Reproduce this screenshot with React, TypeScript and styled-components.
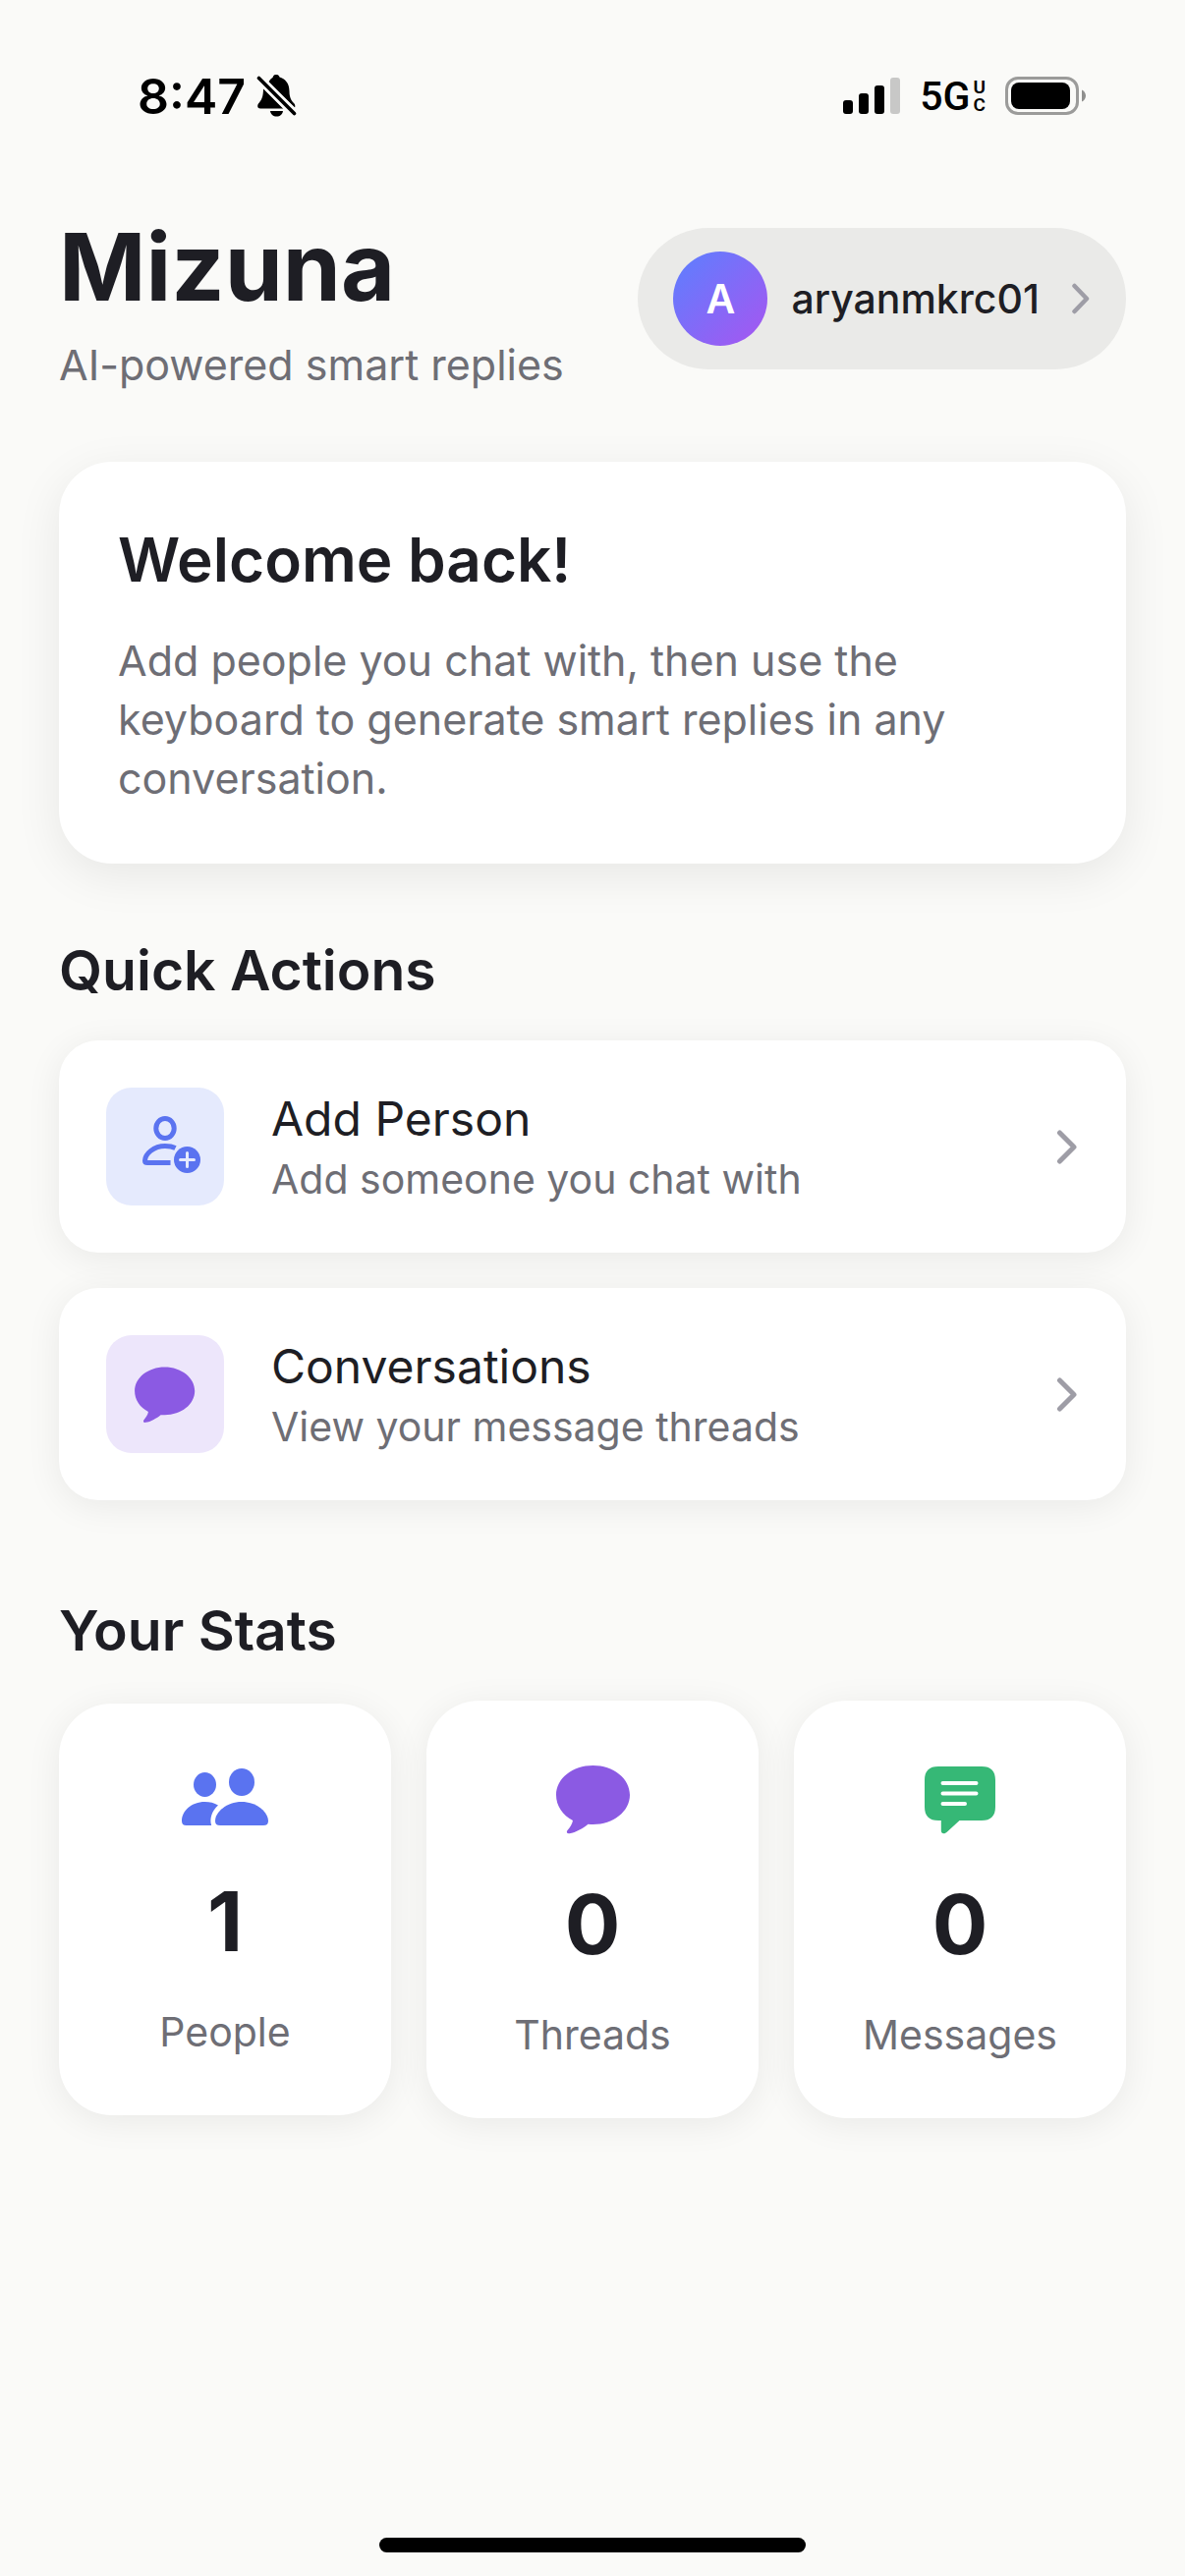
import React from "react";
import styled, { createGlobalStyle } from "styled-components";

const color = {
  page: "#fafaf8",
  card: "#ffffff",
  ink: "#1e1e24",
  muted: "#6e6e75",
  chevron: "#9e9da6",
  pill: "#eaeae8",
  blue: "#5a73f0",
  blueTint: "#e5eafd",
  purple: "#8b5ae3",
  purpleTint: "#ede6fb",
  green: "#36b876",
};

const GlobalStyle = createGlobalStyle`
  *, *::before, *::after { box-sizing: border-box; }
  body {
    margin: 0;
    background: ${color.page};
    color: ${color.ink};
    font-family: Inter, "Liberation Sans", sans-serif;
  }
  h1, h2, p, ul, dl, dd { margin: 0; padding: 0; }
  button { font: inherit; color: inherit; border: 0; cursor: pointer; text-align: left; }
  svg { display: block; flex: none; }
`;

const Screen = styled.div`
  min-height: 100vh;
  display: flex;
  flex-direction: column;
`;

const StatusBar = styled.div`
  height: 177px;
  padding: 20px 100px 0 140px;
  display: flex;
  align-items: flex-start;
  justify-content: space-between;
`;

const StatusGroup = styled.div<{ $gap: number }>`
  height: 156px;
  display: flex;
  align-items: center;
  gap: ${(p) => p.$gap}px;
`;

const Clock = styled.span`
  font-size: 50px;
  line-height: 60px;
  font-weight: 600;
  color: #000;
`;

const Network = styled.span`
  display: flex;
  align-items: center;
  gap: 3px;
  color: #000;
  font-family: Roboto, "Liberation Sans", sans-serif;
  font-size: 41px;
  line-height: 48px;
  font-weight: 500;
`;

const NetworkBadge = styled.span`
  display: flex;
  flex-direction: column;
  font-size: 19px;
  line-height: 18px;
  font-weight: 600;
`;

const Content = styled.main`
  padding: 29px 60px 0;
  display: flex;
  flex-direction: column;
`;

const Header = styled.header`
  display: flex;
  align-items: center;
  justify-content: space-between;
  margin-bottom: 69px;
`;

const Brand = styled.div`
  display: flex;
  flex-direction: column;
  gap: 3px;
`;

const Title = styled.h1`
  font-size: 95px;
  line-height: 132px;
  font-weight: 700;
`;

const BodyText = styled.p`
  font-size: 43px;
  line-height: 60px;
  color: ${color.muted};
`;

const AccountButton = styled.button`
  display: flex;
  align-items: center;
  gap: 24px;
  padding: 24px 36px;
  border-radius: 72px;
  background: ${color.pill};
  font-size: 41px;
  line-height: 54px;
  font-weight: 500;
`;

const Avatar = styled.span`
  width: 96px;
  height: 96px;
  border-radius: 50%;
  display: grid;
  place-items: center;
  color: #fff;
  font-weight: 600;
  background: linear-gradient(135deg, #5b80ff, #a855f0);
`;

const WelcomeCard = styled.section`
  display: flex;
  flex-direction: column;
  gap: 29px;
  padding: 57px 60px;
  border-radius: 54px;
  background: ${color.card};
  box-shadow: 0 12px 48px rgba(0, 0, 0, 0.08);
`;

const WelcomeTitle = styled.h2`
  font-size: 62px;
  line-height: 86px;
  font-weight: 600;
`;

const Section = styled.section<{ $top: number }>`
  margin-top: ${(p) => p.$top}px;
  display: flex;
  flex-direction: column;
  gap: 35px;
`;

const SectionTitle = styled.h2`
  font-size: 57px;
  line-height: 72px;
  font-weight: 600;
`;

const ActionList = styled.ul`
  list-style: none;
  display: flex;
  flex-direction: column;
  gap: 36px;
`;

const ActionButton = styled.button`
  width: 100%;
  display: flex;
  align-items: center;
  gap: 48px;
  padding: 48px;
  border-radius: 40px;
  background: ${color.card};
  box-shadow: 0 6px 36px rgba(0, 0, 0, 0.07);
`;

const Tile = styled.span<{ $tint: string }>`
  width: 120px;
  height: 120px;
  border-radius: 26px;
  background: ${(p) => p.$tint};
`;

const ActionText = styled.span`
  flex: 1;
  display: flex;
  flex-direction: column;
  gap: 2px;
`;

const ActionTitle = styled.span`
  font-size: 48px;
  line-height: 64px;
`;

const Caption = styled.span`
  font-size: 41px;
  line-height: 54px;
  color: ${color.muted};
`;

const StatGrid = styled.dl`
  display: grid;
  grid-template-columns: repeat(3, 1fr);
  align-items: center;
  gap: 36px;
`;

const StatCard = styled.div`
  display: flex;
  flex-direction: column;
  align-items: center;
  padding: 60px 24px 58px;
  border-radius: 54px;
  background: ${color.card};
  box-shadow: 0 6px 36px rgba(0, 0, 0, 0.07);
`;

const StatValue = styled.dd`
  order: 1;
  margin-top: 44px;
  font-size: 84px;
  line-height: 98px;
  font-weight: 700;
`;

const StatLabel = styled.dt`
  order: 2;
  margin-top: 36px;
  font-size: 41px;
  line-height: 54px;
  color: ${color.muted};
`;

const HomeIndicator = styled.div`
  width: 36%;
  height: 15px;
  margin: auto auto 24px;
  border-radius: 8px;
  background: #000;
`;

const MutedBell = () => (
  <svg width="42" height="46" viewBox="0 0 42 46" aria-label="Silent mode" role="img">
    <path
      d="M12 9C13.500 6.500 15 4.500 16.500 4C17 1.500 18.700 1 20 1C21.500 1 23 1.500 23.500 3.500C29 5 33.500 9.500 33.500 18C33.500 25 36 28 38.500 30.500C39.500 32 39.500 33.500 39 34.500Z"
      fill="#000"
    />
    <path
      d="M7 15L27.500 35.500H4C1 35.500 0.500 32.500 2 30.500C5 27 7 24 7 15Z"
      fill="#000"
    />
    <path d="M14 38H27C26.500 41.500 24 43.500 20.500 43.500C17 43.500 14.500 41.500 14 38Z" fill="#000" />
    <path d="M2.500 4.500L38.500 40.500" stroke={color.page} strokeWidth="9" />
    <path d="M2.500 4.500L38.500 40.500" stroke="#000" strokeWidth="3.600" strokeLinecap="round" />
  </svg>
);

const Signal = () => (
  <svg width="58" height="38" viewBox="0 0 58 38" aria-label="Signal strength" role="img">
    <rect x="0" y="23" width="10" height="14" rx="3" />
    <rect x="16" y="16" width="10" height="21" rx="3" />
    <rect x="32" y="8" width="10" height="29" rx="3" />
    <rect x="48" y="0" width="10" height="37" rx="3" fill="#c8c8c7" />
  </svg>
);

const Battery = () => (
  <svg width="83" height="40" viewBox="0 0 83 40" aria-label="Battery full" role="img">
    <rect x="1.500" y="1.500" width="72" height="36" rx="11.500" fill="none" stroke="#9b9b9a" strokeWidth="3" />
    <rect x="6" y="6" width="60" height="27" rx="8" />
    <path d="M78 13.500C80.500 14.500 82 17 82 19.500C82 22 80.500 24.500 78 25.500Z" fill="#8f8f8e" />
  </svg>
);

const Chevron = ({ small = false }: { small?: boolean }) =>
  small ? (
    <svg width="28" height="32" viewBox="0 0 28 32" aria-hidden="true">
      <path d="M11.500 3L24 16L11.500 29" fill="none" stroke={color.chevron} strokeWidth="4.500" strokeLinecap="round" strokeLinejoin="round" />
    </svg>
  ) : (
    <svg width="24" height="36" viewBox="0 0 24 36" aria-hidden="true">
      <path d="M4.500 4L19 18.500L4.500 33" fill="none" stroke={color.chevron} strokeWidth="5" strokeLinecap="round" strokeLinejoin="round" />
    </svg>
  );

const AddPersonIcon = () => (
  <svg width="120" height="120" viewBox="0 0 120 120" aria-hidden="true">
    <g fill="none" stroke={color.blue} strokeWidth="5">
      <ellipse cx="60" cy="41.500" rx="9.200" ry="10" />
      <path d="M70.500 61.500C67.500 60 64 59.500 60 59.500C48.500 59.500 39.500 67.500 39.500 74.500C39.500 76 40.500 76.500 42 76.500H65.500" />
    </g>
    <circle cx="82.500" cy="73.500" r="13.500" fill={color.blue} />
    <path d="M82.500 66.500V80.500M75.500 73.500H89.500" stroke={color.blueTint} strokeWidth="3" strokeLinecap="round" />
  </svg>
);

const bubblePath =
  "M42.500 6C63.200 6 80 19.200 80 36C80 52.800 63.200 66 42.500 66C41 66 39.500 66 37.500 65.800C33 69.500 25 74.500 18.500 75.300C15.800 75.600 15.200 73.500 16.500 72C19 69 21.500 65.500 22 62C11.500 56.500 5 47 5 36C5 19.200 21.800 6 42.500 6Z";

const BubbleIcon = () => (
  <svg width="84" height="75" viewBox="0 0 84 75" overflow="visible" aria-hidden="true">
    <path d={bubblePath} fill={color.purple} />
  </svg>
);

const TileBubbleIcon = () => (
  <svg width="120" height="120" viewBox="0 0 120 120" aria-hidden="true">
    <path d={bubblePath} fill={color.purple} transform="translate(25 27.500) scale(0.815)" />
  </svg>
);

const PeopleIcon = () => (
  <svg width="96" height="69" viewBox="0 0 96 69" aria-hidden="true">
    <g fill={color.blue}>
      <ellipse cx="27.500" cy="22.500" rx="11.500" ry="12.500" />
      <ellipse cx="65" cy="20" rx="13" ry="14" />
      <path d="M41 43.500C37 41 32.500 40 27.500 40C13.500 40 4 49.500 4 59.500C4 62.500 5.500 64 8.500 64H34.200C32 58 34.500 49 41 43.500Z" />
      <path d="M65 40C49.500 40 38 50.500 38 59.500C38 62.500 39.500 64 43 64H87C90.500 64 92 62.500 92 59.500C92 50.500 80.500 40 65 40Z" />
    </g>
  </svg>
);

const MessageIcon = () => (
  <svg width="84" height="75" viewBox="0 0 84 75" overflow="visible" aria-hidden="true">
    <path
      d="M20 7H64C73.500 7 78 11.500 78 21V48C78 57.500 73.500 62 64 62H41.500L29 73.500C26 76.500 22.800 75.500 22.800 72V62H20C10.500 62 6 57.500 6 48V21C6 11.500 10.500 7 20 7Z"
      fill={color.green}
    />
    <path d="M24.500 24H58.500M24.500 34.500H58.500M24.500 45H47" stroke="#fff" strokeWidth="4" strokeLinecap="round" />
  </svg>
);

const actions = [
  { title: "Add Person", note: "Add someone you chat with", tint: color.blueTint, Icon: AddPersonIcon },
  { title: "Conversations", note: "View your message threads", tint: color.purpleTint, Icon: TileBubbleIcon },
];

const stats = [
  { label: "People", value: 1, Icon: PeopleIcon },
  { label: "Threads", value: 0, Icon: BubbleIcon },
  { label: "Messages", value: 0, Icon: MessageIcon },
];

export default function App() {
  return (
    <Screen>
      <GlobalStyle />
      <StatusBar>
        <StatusGroup $gap={11}>
          <Clock>8:47</Clock>
          <MutedBell />
        </StatusGroup>
        <StatusGroup $gap={20}>
          <Signal />
          <Network>
            5G
            <NetworkBadge>
              <span>U</span>
              <span>C</span>
            </NetworkBadge>
          </Network>
          <Battery />
        </StatusGroup>
      </StatusBar>

      <Content>
        <Header>
          <Brand>
            <Title>Mizuna</Title>
            <BodyText>AI-powered smart replies</BodyText>
          </Brand>
          <AccountButton type="button">
            <Avatar>A</Avatar>
            aryanmkrc01
            <Chevron small />
          </AccountButton>
        </Header>

        <WelcomeCard>
          <WelcomeTitle>Welcome back!</WelcomeTitle>
          <BodyText>
            Add people you chat with, then use the keyboard to generate smart replies in any conversation.
          </BodyText>
        </WelcomeCard>

        <Section $top={73}>
          <SectionTitle>Quick Actions</SectionTitle>
          <ActionList>
            {actions.map(({ title, note, tint, Icon }) => (
              <li key={title}>
                <ActionButton type="button">
                  <Tile $tint={tint}>
                    <Icon />
                  </Tile>
                  <ActionText>
                    <ActionTitle>{title}</ActionTitle>
                    <Caption>{note}</Caption>
                  </ActionText>
                  <Chevron />
                </ActionButton>
              </li>
            ))}
          </ActionList>
        </Section>

        <Section $top={97}>
          <SectionTitle>Your Stats</SectionTitle>
          <StatGrid>
            {stats.map(({ label, value, Icon }) => (
              <StatCard key={label}>
                <Icon />
                <StatLabel>{label}</StatLabel>
                <StatValue>{value}</StatValue>
              </StatCard>
            ))}
          </StatGrid>
        </Section>
      </Content>

      <HomeIndicator />
    </Screen>
  );
}
